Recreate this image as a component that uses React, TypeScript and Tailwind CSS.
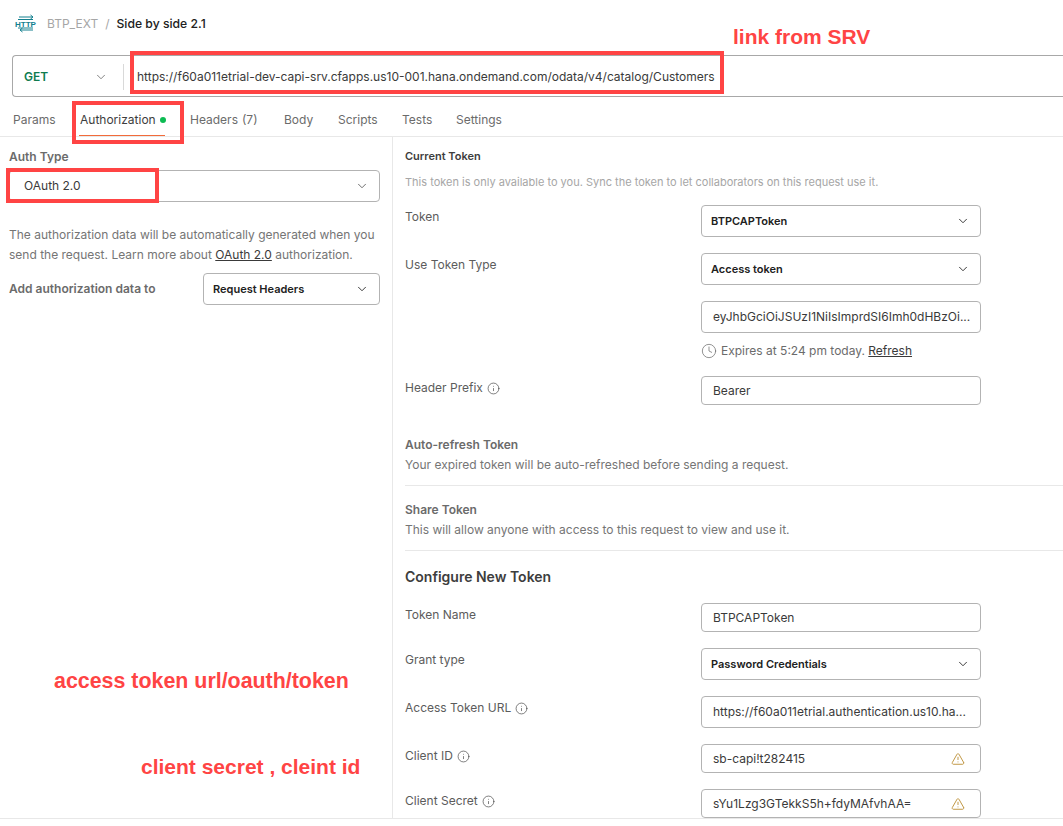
import React from "react";
import { ChevronDown, Clock, Info, TriangleAlert } from "lucide-react";

function SelectBox({ value, className = "" }: { value: string; className?: string }) {
  return (
    <div className={`flex items-center justify-between rounded border border-[#b3b3b3] pl-[9px] pr-[10px] font-semibold text-[11px] text-[#212121] ${className}`}>
      <span>{value}</span>
      <ChevronDown size={14} strokeWidth={1.5} />
    </div>
  );
}

function TextBox({ value, warn = false, h = "h-[29px]" }: { value: string; warn?: boolean; h?: string }) {
  return (
    <div className={`flex w-[280px] items-center justify-between rounded border border-[#b3b3b3] pl-[11px] pr-[15px] text-[12px] text-[#3a3a3a] ${h}`}>
      <span className="whitespace-nowrap">{value}</span>
      {warn && <TriangleAlert size={14} strokeWidth={1.5} className="shrink-0 text-[#b8892b]" />}
    </div>
  );
}

function Row({ label, info = false, mt, children }: { label: string; info?: boolean; mt: string; children: React.ReactNode }) {
  return (
    <div className={`flex ${mt}`}>
      <div className="mt-[2px] flex h-[20px] w-[296px] items-center gap-[4px] text-[12px] text-[#5c5c5c]">
        {label}
        {info && <Info size={13} strokeWidth={1.25} className="text-[#444]" />}
      </div>
      {children}
    </div>
  );
}

const tabs = [
  { name: "Params", w: "w-[67px]" },
  { name: "Authorization", w: "w-[110px]" },
  { name: "Headers", w: "w-[94px]" },
  { name: "Body", w: "w-[54px]" },
  { name: "Scripts", w: "w-[64px]" },
  { name: "Tests", w: "w-[54px]" },
  { name: "Settings", w: "w-[60px]" },
];

export default function App() {
  return (
    <div className="relative h-[826px] w-[1063px] overflow-hidden bg-white font-['Inter',sans-serif] text-[12px] text-[#6b6b6b]">
      {/* header */}
      <div className="flex h-[47px] items-center pl-[17px] pt-[1px]">
        <svg width="18" height="18" viewBox="0 0 18 18" className="overflow-visible text-[#14808f]" fill="none" stroke="currentColor" strokeWidth="1">
          <path d="M2 2h14M13.5 0l2.5 2-2.5 2" />
          <path d="M1 4.5h15M1 13h15" />
          <path d="M16 15H3M5.5 13l-2.5 2 2.5 2" />
          <text x="8.5" y="11.8" textAnchor="middle" fontSize="8" fontWeight="700" fontFamily="Liberation Sans Narrow, Liberation Sans, sans-serif" fill="currentColor" stroke="none">HTTP</text>
        </svg>
        <span className="ml-[12px] text-[#a6a6a6]">BTP_EXT</span>
        <span className="mx-[7px] text-[#a6a6a6]">/</span>
        <span className="text-[12.2px] font-medium text-[#212121]">Side by side 2.1</span>
      </div>

      {/* url bar */}
      <div className="mt-[8px] ml-[12px] flex h-[42px] items-center rounded-l border border-r-0 border-[#a8a8a8] pt-[1px]">
        <span className="ml-[11px] w-[70px] text-[12px] font-semibold text-[#0f7b4f]">GET</span>
        <ChevronDown size={14} strokeWidth={1.25} className="text-[#555]" />
        <div className="ml-[15px] h-[26px] w-px bg-[#d9d9d9]" />
        <span className="ml-[13px] whitespace-nowrap text-[12px] text-[#3a3a3a]">
          https://f60a011etrial-dev-capi-srv.cfapps.us10-001.hana.ondemand.com/odata/v4/catalog/Customers
        </span>
      </div>

      {/* tabs */}
      <div className="flex h-[40px] items-center border-b border-[#e8e8e8] pl-[13px] pt-[6px]">
        {tabs.map((t) => (
          <div key={t.name} className={`flex items-center whitespace-nowrap ${t.w}`}>
            <span className={t.name === "Authorization" ? "text-[#3d3d3d]" : "text-[#6b6b6b]"}>{t.name}</span>
            {t.name === "Authorization" && <span className="ml-[4px] h-[6px] w-[6px] rounded-full bg-[#0cbb52]" />}
            {t.name === "Headers" && <span className="ml-[4px] text-[#6b6b6b]">(7)</span>}
          </div>
        ))}
      </div>

      {/* body */}
      <div className="flex h-[682px] overflow-hidden border-b border-[#e8e8e8]">
        <div className="w-[393px] shrink-0 border-r border-[#e8e8e8] pl-[9px] pr-[12px] pt-[12px]">
          <div className="font-semibold leading-[16px] text-[#6b6b6b]">Auth Type</div>
          <div className="mt-[5px] flex h-[32px] items-center justify-between rounded border border-[#b3b3b3] pl-[14px] pr-[10px] text-[#3a3a3a]">
            <span>OAuth 2.0</span>
            <ChevronDown size={14} strokeWidth={1.25} />
          </div>
          <p className="mt-[23px] whitespace-nowrap text-[12px] leading-[20px] text-[#757575]">
            The authorization data will be automatically generated when you
            <br />
            send the request. Learn more about <span className="text-[#3a3a3a] underline">OAuth 2.0</span> authorization.
          </p>
          <div className="mt-[8px] flex items-center justify-between">
            <span className="font-semibold text-[#6b6b6b]">Add authorization data to</span>
            <SelectBox value="Request Headers" className="h-[32px] w-[177px]" />
          </div>
        </div>

        <div className="min-w-0 flex-1 pl-[12px] pt-[11px]">
          <div className="text-[11px] font-semibold leading-[16px] text-[#3d3d3d]">Current Token</div>
          <div className="mt-[10px] text-[11px] leading-[16px] text-[#a6a6a6]">
            This token is only available to you. Sync the token to let collaborators on this request use it.
          </div>
          <Row label="Token" mt="mt-[15px]">
            <SelectBox value="BTPCAPToken" className="h-[32px] w-[280px]" />
          </Row>
          <Row label="Use Token Type" mt="mt-[16px]">
            <SelectBox value="Access token" className="h-[32px] w-[280px]" />
          </Row>
          <div className="mt-[16px] ml-[296px]">
            <TextBox value="eyJhbGciOiJSUzI1NiIsImprdSI6Imh0dHBzOi..." h="h-[32px]" />
            <div className="mt-[9px] flex h-[18px] items-center gap-[4px] text-[#6b6b6b]">
              <Clock size={16} strokeWidth={1.1} />
              <span>
                Expires at 5:24 pm today. <span className="text-[#3a3a3a] underline">Refresh</span>
              </span>
            </div>
          </div>
          <Row label="Header Prefix" info mt="mt-[16px]">
            <TextBox value="Bearer" />
          </Row>
          <div className="mt-[32px] text-[12px] font-semibold leading-[16px] text-[#6b6b6b]">Auto-refresh Token</div>
          <div className="mt-[4px] text-[12px] leading-[16px] text-[#757575]">Your expired token will be auto-refreshed before sending a request.</div>
          <div className="mt-[12px] border-t border-[#e8e8e8] pt-[16px]">
            <div className="text-[12px] font-semibold leading-[16px] text-[#6b6b6b]">Share Token</div>
            <div className="mt-[4px] text-[12px] leading-[16px] text-[#757575]">This will allow anyone with access to this request to view and use it.</div>
          </div>
          <div className="mt-[12px] border-t border-[#e8e8e8] pt-[17px]">
            <div className="text-[14px] font-semibold leading-[18px] text-[#3d3d3d]">Configure New Token</div>
          </div>
          <Row label="Token Name" mt="mt-[17px]">
            <TextBox value="BTPCAPToken" />
          </Row>
          <Row label="Grant type" mt="mt-[16px]">
            <SelectBox value="Password Credentials" className="h-[32px] w-[280px]" />
          </Row>
          <Row label="Access Token URL" info mt="mt-[16px]">
            <TextBox value="https://f60a011etrial.authentication.us10.ha..." h="h-[32px]" />
          </Row>
          <Row label="Client ID" info mt="mt-[16px]">
            <TextBox value="sb-capi!t282415" warn />
          </Row>
          <Row label="Client Secret" info mt="mt-[16px]">
            <TextBox value="sYu1Lzg3GTekkS5h+fdyMAfvhAA=" warn />
          </Row>
        </div>
      </div>

      {/* active tab underline */}
      <div className="absolute left-[79px] top-[135px] h-px w-[86px] bg-[#f26b3a]" />

      {/* annotations drawn over the screenshot */}
      <div className="absolute left-[130px] top-[51px] h-[43px] w-[594px] border-[4px] border-[#ff4444]" />
      <div className="absolute left-[72px] top-[101px] h-[43px] w-[112px] border-[4px] border-[#ff4444]" />
      <div className="absolute left-[6px] top-[168px] h-[35px] w-[153px] border-[4px] border-[#ff4444]" />
      <div className="absolute left-[733px] top-[25px] font-['Liberation_Sans',sans-serif] text-[21px] font-bold leading-[24px] text-[#ff4444]">link from SRV</div>
      <div className="absolute left-[54px] top-[669px] font-['Liberation_Sans',sans-serif] text-[21.4px] font-bold leading-[24px] text-[#ff4444]">access token url/oauth/token</div>
      <div className="absolute left-[141px] top-[755px] font-['Liberation_Sans',sans-serif] text-[21px] font-bold leading-[24px] text-[#ff4444]">client secret , cleint id</div>
    </div>
  );
}
